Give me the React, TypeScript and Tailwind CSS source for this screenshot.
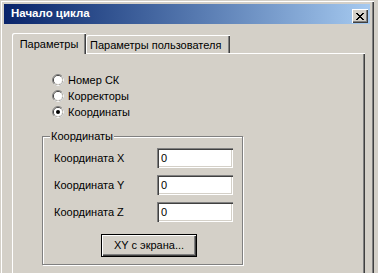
import React from 'react';

const face = 'bg-[#d4d0c8]';

function Radio({ checked }: { checked?: boolean }) {
    return (
        <svg width="12" height="12" viewBox="0 0 12 12" className="shrink-0">
            <circle cx="6" cy="6" r="5.5" fill="none" stroke="#808080" />
            <path d="M9.89 2.11 A5.5 5.5 0 0 1 2.11 9.89" fill="none" stroke="#ffffff" />
            <circle cx="6" cy="6" r="4.5" fill="none" stroke="#404040" />
            <path d="M9.18 2.82 A4.5 4.5 0 0 1 2.82 9.18" fill="none" stroke="#d4d0c8" />
            <circle cx="6" cy="6" r="4" fill="#ffffff" />
            {checked && <circle cx="6" cy="6" r="2" fill="#000000" />}
        </svg>
    );
}

function Field({ label, value }: { label: string; value: string }) {
    return (
        <div className="flex items-center h-[20px]">
            <span className="w-[104px] pl-px">{label}</span>
            <div className="w-[76px] h-[20px] bg-white flex items-center pl-[4px] shadow-[inset_1px_1px_0_#808080,inset_2px_2px_0_#404040,inset_-1px_-1px_0_#ffffff,inset_-2px_-2px_0_#d4d0c8]">
                {value}
            </div>
        </div>
    );
}

export default function App() {
    return (
        <div
            className={`w-[378px] h-[273px] overflow-hidden ${face} text-[11px] text-black leading-none`}
            style={{ fontFamily: '"Liberation Sans", Arial, sans-serif' }}
        >
            {/* window frame */}
            <div className={`w-[374px] h-[320px] p-[4px] ${face} shadow-[inset_1px_1px_0_#d4d0c8,inset_2px_2px_0_#ffffff,inset_-1px_-1px_0_#404040,inset_-2px_-2px_0_#808080]`}>
                {/* caption */}
                <div className="h-[20px] flex items-center justify-between pl-[7px] pr-[2px] bg-gradient-to-r from-[#0a246a] to-[#a6caf0]">
                    <span className="text-white font-bold text-[11.5px]">Начало цикла</span>
                    <div className={`self-end mb-[1px] w-[16px] h-[14px] ${face} flex items-center justify-center shadow-[inset_1px_1px_0_#ffffff,inset_-1px_-1px_0_#404040,inset_-2px_-2px_0_#808080]`}>
                        <svg width="8" height="7" viewBox="0 0 8 7" shapeRendering="crispEdges">
                            <path
                                d="M0 0h2v1H0zM6 0h2v1H6zM1 1h2v1H1zM5 1h2v1H5zM2 2h4v1H2zM3 3h2v1H3zM2 4h4v1H2zM1 5h2v1H1zM5 5h2v1H5zM0 6h2v1H0zM6 6h2v1H6z"
                                fill="#000000"
                            />
                        </svg>
                    </div>
                </div>

                {/* tab control */}
                <div className="ml-[8px] mt-[9px] w-[353px]">
                    <div className="flex items-end h-[20px]">
                        <div className={`relative z-10 w-[74px] h-[21px] -mb-px ${face} flex items-start justify-center pt-[6px] rounded-tl-[2px] shadow-[inset_1px_1px_0_#ffffff,inset_-1px_0_0_#404040,inset_-2px_0_0_#808080]`}>
                            Параметры
                        </div>
                        <div className={`w-[144px] h-[18px] ${face} flex items-start pl-[4px] pt-[5px] rounded-tl-[2px] shadow-[inset_1px_1px_0_#ffffff,inset_-1px_0_0_#404040,inset_-2px_0_0_#808080]`}>
                            Параметры пользователя
                        </div>
                    </div>
                    <div className={`h-[260px] ${face} pt-[19px] pl-[40px] shadow-[inset_1px_1px_0_#ffffff,inset_-1px_-1px_0_#404040,inset_-2px_-2px_0_#808080]`}>
                        <div className="flex flex-col">
                            {[
                                { label: 'Номер СК', checked: false },
                                { label: 'Корректоры', checked: false },
                                { label: 'Координаты', checked: true },
                            ].map((r) => (
                                <div key={r.label} className="flex items-center h-[16px] gap-[4px]">
                                    <Radio checked={r.checked} />
                                    <span>{r.label}</span>
                                </div>
                            ))}
                        </div>

                        {/* group box */}
                        <div className="relative ml-[-10px] mt-[16px] w-[201px] h-[129px] border border-[#808080] shadow-[1px_1px_0_#ffffff,inset_1px_1px_0_#ffffff]">
                            <span className={`absolute left-[7px] top-[-6px] px-px ${face}`}>Координаты</span>
                            <div className="pt-[11px] pl-[10px] flex flex-col gap-[7px]">
                                <Field label="Координата X" value="0" />
                                <Field label="Координата Y" value="0" />
                                <Field label="Координата Z" value="0" />
                            </div>
                            <div className="mt-[12px] ml-[58px] w-[96px] h-[23px] border border-black flex items-center justify-center shadow-[inset_1px_1px_0_#ffffff,inset_-1px_-1px_0_#404040,inset_-2px_-2px_0_#808080]">
                                XY с экрана...
                            </div>
                        </div>
                    </div>
                </div>
            </div>
        </div>
    );
}
